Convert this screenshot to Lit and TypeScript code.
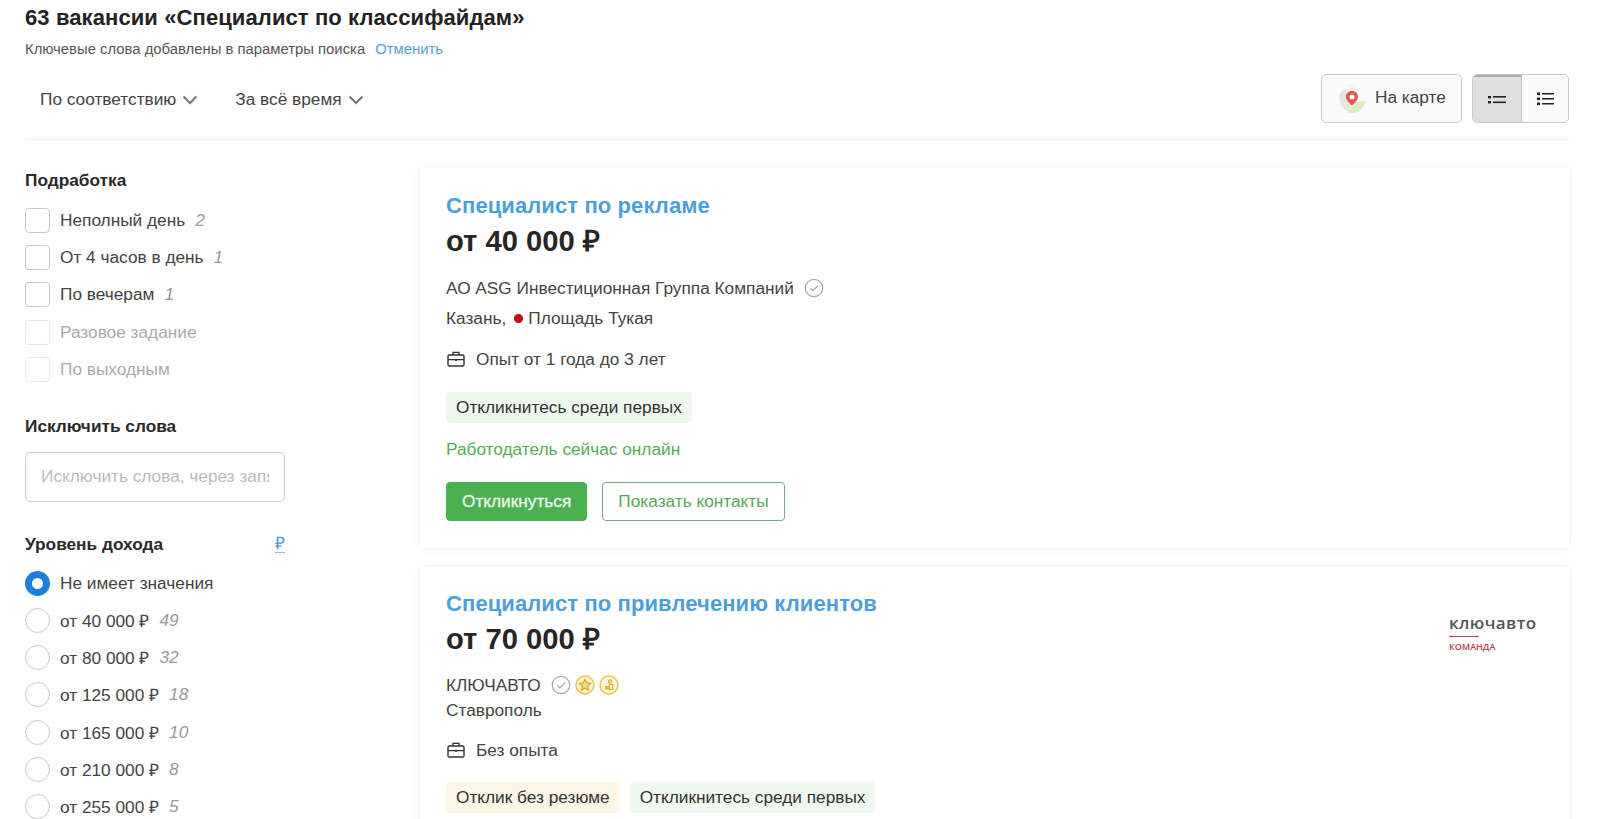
import { LitElement, html, css, svg } from "lit";
import { customElement } from "lit/decorators.js";

const chevron = html`<svg class="chev" width="16" height="10" viewBox="0 0 16 10"><path d="M1.500 1.500 8 8l6.500-6.500" fill="none" stroke="#777" stroke-width="2"/></svg>`;
const check = svg`<circle cx="10" cy="10" r="8.700" fill="none" stroke="#aaa" stroke-width="1.300"/><path d="M6.300 10.300l2.600 2.500 5-5.200" fill="none" stroke="#999" stroke-width="1.100"/>`;
const verified = html`<svg class="badge" width="20" height="20" viewBox="0 0 20 20">${check}</svg>`;
const star = html`<svg class="badge" width="20" height="20" viewBox="0 0 20 20"><circle cx="10" cy="10" r="9" fill="#fdf3d0" stroke="#ecc244" stroke-width="1.400"/><path d="M10 4.200l1.700 3.700 4 .5-3 2.700.8 4L10 13.200l-3.500 1.900.8-4-3-2.700 4-.5z" fill="#f7dc7a" stroke="#d9a520" stroke-width="1.100"/></svg>`;
const coins = html`<svg class="badge" width="20" height="20" viewBox="0 0 20 20"><circle cx="10" cy="10" r="9" fill="#fdf6de" stroke="#ecc244" stroke-width="1.400"/><circle cx="11" cy="6.500" r="1.600" fill="none" stroke="#d9a520" stroke-width="1.100"/><rect x="6.200" y="11" width="3.600" height="3.600" fill="#e3b32c"/><rect x="10.400" y="9.400" width="3.400" height="5.200" fill="none" stroke="#d9a520" stroke-width="1.100"/></svg>`;
const briefcase = html`<svg class="case" width="18" height="16" viewBox="0 0 18 16"><g fill="none" stroke="#333" stroke-width="1.400"><rect x="1" y="4" width="16" height="11" rx="1.200"/><path d="M6 4V1.400h6V4M1 8.600h16"/></g><rect x="7.800" y="7.800" width="2.400" height="2" fill="#333"/></svg>`;

const checks: [string, string, boolean][] = [
  ["Неполный день", "2", false],
  ["От 4 часов в день", "1", false],
  ["По вечерам", "1", false],
  ["Разовое задание", "", true],
  ["По выходным", "", true],
];
const radios: [string, string][] = [
  ["от 40 000 ₽", "49"],
  ["от 80 000 ₽", "32"],
  ["от 125 000 ₽", "18"],
  ["от 165 000 ₽", "10"],
  ["от 210 000 ₽", "8"],
  ["от 255 000 ₽", "5"],
];

@customElement("app-root")
export class AppRoot extends LitElement {
  static styles = css`
    :host {
      display: block;
      height: 819px;
      overflow: hidden;
      background: #fff;
      font-family: "Liberation Sans", Arial, sans-serif;
      color: #333;
      font-size: 17.25px;
    }
    .page { padding: 6px 31px 0 25px; }
    h1 {
      margin: 0;
      font-size: 22px;
      line-height: 24px;
      font-weight: 700;
      color: #232323;
      letter-spacing: 0.1px;
    }
    .sub {
      margin-top: 11px;
      font-size: 14.850px;
      line-height: 16px;
      color: #555;
      display: flex;
      gap: 10px;
    }
    .sub a { color: #5b9fd0; }
    .bar {
      margin-top: 17px;
      height: 65px;
      display: flex;
      align-items: center;
      justify-content: space-between;
      border-bottom: 1px solid #eee;
    }
    .sorts { display: flex; gap: 37px; padding-left: 15px; margin-top: -16px; }
    .sort { display: flex; align-items: center; gap: 6px; color: #444; line-height: 20px; }
    .chev { margin-top: 3px; }
    .tools { display: flex; gap: 10px; margin-top: -16px; }
    .map {
      width: 141px;
      height: 49px;
      box-sizing: border-box;
      border: 1px solid #ccc;
      border-radius: 5px;
      background: #fafafa;
      display: flex;
      align-items: center;
      gap: 8px;
      padding-left: 15px;
      color: #444;
    }
    .map span { padding-bottom: 2px; }
    .views {
      width: 97px;
      height: 49px;
      box-sizing: border-box;
      border: 1px solid #ccc;
      border-radius: 5px;
      background: #fafafa;
      display: flex;
      overflow: hidden;
    }
    .view { display: flex; align-items: center; justify-content: center; flex: 1; }
    .view.on { flex: 0 0 48px; background: #dfdfdf; border-top: 2px solid #aaa; border-right: 1px solid #c4c4c4; }
    aside { width: 260px; margin-right: 135px; padding-top: 30px; flex: none; }
    .content { display: flex; }
    h3 {
      margin: 0;
      font-size: 17.250px;
      line-height: 20px;
      font-weight: 700;
      color: #2a2a2a;
      display: flex;
      justify-content: space-between;
    }
    .opts { margin-top: 18px; display: flex; flex-direction: column; gap: 12.200px; }
    .opt { display: flex; align-items: center; height: 25px; color: #444; }
    .box {
      width: 25px;
      height: 25px;
      box-sizing: border-box;
      border: 1px solid #c8c8c8;
      border-radius: 4px;
      margin-right: 10px;
      flex: none;
    }
    .radio { border-radius: 50%; }
    .radio.on { border: 7px solid #1b80d8; }
    .opt.off { color: #aaa; }
    .opt.off .box { border-color: #e6e6e6; }
    .count { margin-left: 10px; font-style: italic; color: #999; }
    .block2 { margin-top: 34px; }
    .input {
      display: block;
      width: 100%;
      margin-top: 16px;
      height: 50px;
      box-sizing: border-box;
      border: 1px solid #ccc;
      border-radius: 5px;
      padding: 0 15px;
      outline: none;
      background: #fff;
      font: inherit;
      color: #333;
    }
    .input::placeholder { color: #bbb; opacity: 1; }
    .block3 { margin-top: 32px; }
    .block3 .opts { margin-top: 17px; }
    .rub { color: #4a9ad4; font-weight: 400; border-bottom: 1px dashed #7db4dc; line-height: 17px; height: 17px; margin-top: 1px; }
    main { flex: 1; padding-top: 28px; display: flex; flex-direction: column; gap: 19px; min-width: 0; }
    .card {
      position: relative;
      background: #fff;
      box-shadow: 0 0 8px rgba(0, 0, 0, 0.07);
      padding: 25px 26px 27px;
    }
    .card.second { padding-top: 24px; }
    .job { font-size: 22px; line-height: 26px; font-weight: 700; color: #4b9fdd; letter-spacing: 0.1px; }
    .price { margin-top: 6px; font-size: 29.200px; line-height: 32px; font-weight: 700; color: #262626; }
    .org { margin-top: 19px; line-height: 24px; color: #444; display: flex; align-items: center; }
    .org.tight { margin-top: 18px; }
    .badge { margin-left: 4px; }
    .org span { margin-right: 6px; }
    .loc { margin-top: 6px; padding-bottom: 1px; line-height: 24px; color: #444; display: flex; align-items: center; }
    .loc.near { margin-top: 1px; padding-bottom: 0; }
    .dot { width: 9px; height: 9px; border-radius: 50%; background: #c40a12; margin: 0 5px 0 8px; }
    .exp { margin-top: 16px; line-height: 24px; color: #444; display: flex; align-items: center; gap: 11px; padding-left: 1px; }
    .tags { margin-top: 20px; display: flex; gap: 10px; }
    .tags.wide { margin-top: 21px; }
    .tag { height: 31px; border-radius: 4px; padding: 0 10px; line-height: 31px; background: #eef8ee; color: #333; }
    .tag.y { background: #fdf6e6; }
    .online { margin-top: 14px; line-height: 24px; color: #55ad58; }
    .btns { margin-top: 21px; display: flex; gap: 15px; }
    .btn {
      height: 39px;
      box-sizing: border-box;
      border-radius: 4px;
      padding: 0 15px;
      line-height: 37px;
      border: 1px solid #4caf50;
    }
    .btn.p { background: #4caf50; color: #eef8ee; -webkit-text-stroke: 0.3px #eef8ee; }
    .btn.s { background: #fff; color: #55a858; border-color: #79ab7c; }
    .logo { position: absolute; left: 1029px; top: 46px; width: 90px; font-family: "Open Sans", "Noto Sans", sans-serif; }
    .logo b { display: block; font-size: 17px; line-height: 20px; font-weight: 600; color: #555; letter-spacing: 0.4px; }
    .logo i { display: block; width: 30px; height: 1px; background: #b8404f; margin-top: 3px; }
    .logo small { display: block; margin-top: 4px; font-size: 9px; line-height: 12px; font-weight: 600; color: #b8404f; }
  `;

  render() {
    return html`
      <div class="page">
        <h1>63 вакансии «Специалист по классифайдам»</h1>
        <div class="sub"><span>Ключевые слова добавлены в параметры поиска</span><a>Отменить</a></div>
        <div class="bar">
          <div class="sorts">
            <div class="sort">По соответствию ${chevron}</div>
            <div class="sort">За всё время ${chevron}</div>
          </div>
          <div class="tools">
            <div class="map">
              <svg width="30" height="34" viewBox="0 0 30 34">
                <path d="M3 11c-2 8 1 15 8 19l5-10-8-13z" fill="#e6e6e2"/>
                <path d="M10 31c8 2 15-2 19-12l-10 1z" fill="#dcebc0"/>
                <path d="M9 3l9-1 6 7-6 3z" fill="#f4f3ef"/>
                <path d="M15 9c-3.600 0-6 2.700-6 5.700 0 3.300 3.600 6.600 6 8.800 2.400-2.200 6-5.500 6-8.800C21 11.700 18.600 9 15 9z" fill="#e2574f"/>
                <circle cx="15" cy="15" r="2.500" fill="#fff"/>
              </svg>
              <span>На карте</span>
            </div>
            <div class="views">
              <div class="view on">
                <svg width="18" height="10" viewBox="0 0 18 10"><g fill="#222"><rect y="1" width="3" height="2.400"/><rect y="6" width="3" height="2.400"/><rect x="5" y="1" width="13" height="1.600"/><rect x="5" y="6.500" width="13" height="1.600"/></g></svg>
              </div>
              <div class="view">
                <svg width="17" height="14" viewBox="0 0 17 14"><g fill="#222"><rect y="0.500" width="3" height="2.600"/><rect y="5.500" width="3" height="2.600"/><rect y="10.500" width="3" height="2.600"/><rect x="5" y="1" width="12" height="1.500"/><rect x="5" y="6" width="12" height="1.500"/><rect x="5" y="11" width="12" height="1.500"/></g></svg>
              </div>
            </div>
          </div>
        </div>
        <div class="content">
          <aside>
            <h3>Подработка</h3>
            <div class="opts">
              ${checks.map(([t, c, off]) => html`<div class="opt ${off ? "off" : ""}"><span class="box"></span>${t}${c ? html`<span class="count">${c}</span>` : ""}</div>`)}
            </div>
            <div class="block2">
              <h3>Исключить слова</h3>
              <input class="input" placeholder="Исключить слова, через запятую" />
            </div>
            <div class="block3">
              <h3>Уровень дохода <span class="rub">₽</span></h3>
              <div class="opts">
                <div class="opt"><span class="box radio on"></span>Не имеет значения</div>
                ${radios.map(([t, c]) => html`<div class="opt"><span class="box radio"></span>${t}<span class="count">${c}</span></div>`)}
              </div>
            </div>
          </aside>
          <main>
            <article class="card">
              <div class="job">Специалист по рекламе</div>
              <div class="price">от 40 000 ₽</div>
              <div class="org"><span>АО ASG Инвестиционная Группа Компаний</span>${verified}</div>
              <div class="loc">Казань, <i class="dot"></i>Площадь Тукая</div>
              <div class="exp">${briefcase}Опыт от 1 года до 3 лет</div>
              <div class="tags wide"><div class="tag">Откликнитесь среди первых</div></div>
              <div class="online">Работодатель сейчас онлайн</div>
              <div class="btns"><div class="btn p">Откликнуться</div><div class="btn s">Показать контакты</div></div>
            </article>
            <article class="card second">
              <div class="logo"><b>ключавто</b><i></i><small>КОМАНДА</small></div>
              <div class="job">Специалист по привлечению клиентов</div>
              <div class="price">от 70 000 ₽</div>
              <div class="org tight"><span>КЛЮЧАВТО</span>${verified}${star}${coins}</div>
              <div class="loc near">Ставрополь</div>
              <div class="exp">${briefcase}Без опыта</div>
              <div class="tags"><div class="tag y">Отклик без резюме</div><div class="tag">Откликнитесь среди первых</div></div>
            </article>
          </main>
        </div>
      </div>
    `;
  }
}
